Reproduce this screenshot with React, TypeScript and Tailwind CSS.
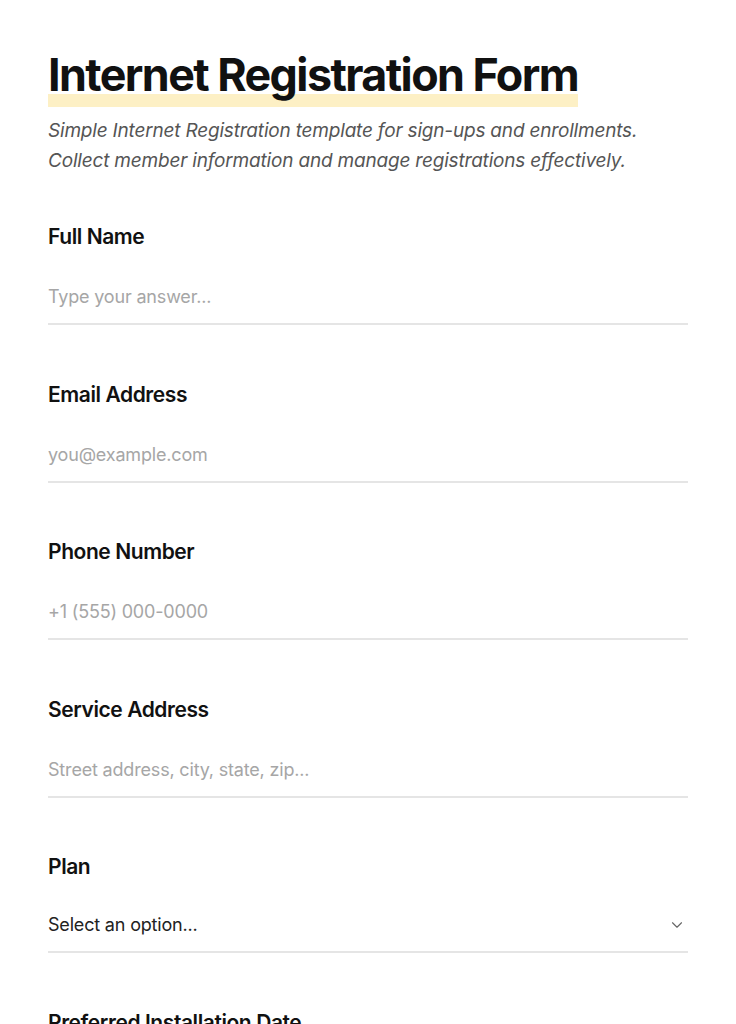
import React from 'react';

interface Field {
  label: string;
  placeholder: string;
  type?: 'text' | 'select';
}

const fields: Field[] = [
  { label: 'Full Name', placeholder: 'Type your answer...' },
  { label: 'Email Address', placeholder: 'you@example.com' },
  { label: 'Phone Number', placeholder: '+1 (555) 000-0000' },
  { label: 'Service Address', placeholder: 'Street address, city, state, zip...' },
  { label: 'Plan', placeholder: 'Select an option...', type: 'select' },
  { label: 'Preferred Installation Date', placeholder: 'Select a date...' },
];

const App: React.FC = (): React.ReactElement => {
  return (
    <div className="min-h-screen bg-white font-['Inter',sans-serif] text-[#111]">
      <div className="px-12 pt-[51px] pb-16">
        <h1 className="text-[44.8px] leading-[48px] font-bold tracking-[-0.035em]">
          <span className="bg-linear-to-t from-[#fdf0c5] from-[22%] to-transparent to-[22%] pb-[5px]">
            Internet Registration Form
          </span>
        </h1>
        <p className="mt-[17px] text-[19px] leading-[30px] italic text-[#555] tracking-[-0.01em]">
          Simple Internet Registration template for sign-ups and enrollments.
          <br />
          Collect member information and manage registrations effectively.
        </p>

        <div className="mt-[47px] flex flex-col gap-[55.5px]">
          {fields.map((field) => (
            <div key={field.label}>
              <label className="block text-[21px] leading-7 font-semibold tracking-[-0.02em]">
                {field.label}
              </label>
              {field.type === 'select' ? (
                <div className="mt-[18px] flex items-center justify-between border-b-2 border-[#e5e5e5] py-3">
                  <span className="text-[18px] leading-7 text-[#222] tracking-[-0.01em]">
                    {field.placeholder}
                  </span>
                  <svg width="18" height="18" viewBox="0 0 24 24" fill="none" stroke="#666" strokeWidth="1.5" strokeLinecap="round" strokeLinejoin="round" className="mr-0.5">
                    <path d="M6 9l6 6 6-6" />
                  </svg>
                </div>
              ) : (
                <input
                  type="text"
                  placeholder={field.placeholder}
                  className="mt-5 block w-full border-b-2 border-[#e5e5e5] py-3 text-[18px] leading-7 tracking-[-0.01em] outline-none placeholder:text-[#a6a6a6]"
                />
              )}
            </div>
          ))}
        </div>
      </div>
    </div>
  );
};

export default App;
